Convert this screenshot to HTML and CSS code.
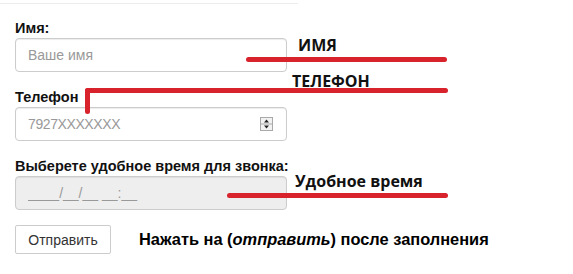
FILE: index.html
```html
<!DOCTYPE html>
<html lang="ru">
<head>
    <meta charset="UTF-8">
    <title>Заказать звонок</title>
    <link rel="stylesheet" href="styles.css">
</head>
<body>

<div class="page">
    <div class="top-rule"></div>

    <form class="call-form">
        <div class="form-group">
            <label for="name">Имя:</label>
            <input type="text" id="name" class="form-control" placeholder="Ваше имя">
        </div>
        <div class="form-group">
            <label for="phone">Телефон</label>
            <div class="spin-wrap">
                <input type="text" id="phone" class="form-control" placeholder="7927XXXXXXX">
                <span class="spinner">
                    <svg width="13" height="14" viewBox="0 0 13 14">
                        <rect x="0.5" y="0.5" width="12" height="13" fill="#f2f2f2" stroke="#a9a9a9"/>
                        <line x1="1" y1="7" x2="12" y2="7" stroke="#a9a9a9"/>
                        <path d="M4 5.5 L6.5 2.5 L9 5.5 Z" fill="#222"/>
                        <path d="M4 8.5 L6.5 11.5 L9 8.5 Z" fill="#222"/>
                    </svg>
                </span>
            </div>
        </div>
        <div class="form-group">
            <label for="time">Выберете удобное время для звонка:</label>
            <input type="text" id="time" class="form-control readonly" value="____/__/__ __:__" readonly>
        </div>
        <div class="submit-row">
            <button type="button" class="btn">Отправить</button>
            <span class="hint">Нажать на (<em>отправить</em>) после заполнения</span>
        </div>
    </form>

    <!-- пометки поверх формы -->
    <span class="note note-name">ИМЯ</span>
    <span class="mark mark-name"></span>

    <span class="note note-phone">ТЕЛЕФОН</span>
    <span class="mark mark-phone"></span>
    <span class="mark mark-phone-down"></span>

    <span class="note note-time">Удобное время</span>
    <span class="mark mark-time"></span>
</div>

</body>
</html>
```

FILE: styles.css
```css
body {
    margin: 0;
    padding: 0;
    background: #fff;
    font-family: "Liberation Sans", Arial, sans-serif;
    color: #000;
}
.page {
    position: relative;
    width: 573px;
    height: 274px;
    overflow: hidden;
}
.top-rule {
    width: 298px;
    height: 3px;
    border-bottom: 1px solid #ececec;
}
.call-form {
    padding: 14px 0 0 15px;
}
.form-group {
    margin-bottom: 15px;
}
.form-group label {
    display: block;
    font-size: 14.5px;
    font-weight: bold;
    line-height: 20px;
    color: #111;
}
.form-control {
    display: block;
    box-sizing: border-box;
    width: 272px;
    height: 34px;
    padding: 6px 12px;
    font-family: "Liberation Sans", Arial, sans-serif;
    font-size: 14px;
    color: #555;
    border: 1px solid #ccc;
    border-radius: 4px;
    box-shadow: inset 0 1px 1px rgba(0, 0, 0, 0.075);
    background: #fff;
}
.form-control::placeholder {
    color: #999;
}
#phone::placeholder {
    letter-spacing: -0.4px;
}
.form-control.readonly {
    background: #eee;
    color: #999;
}
.spin-wrap {
    position: relative;
    width: 272px;
}
.spinner {
    position: absolute;
    right: 14px;
    top: 10px;
    line-height: 0;
}
.submit-row {
    display: flex;
    align-items: center;
}
.btn {
    box-sizing: border-box;
    width: 96px;
    height: 29px;
    font-family: "Liberation Sans", Arial, sans-serif;
    font-size: 14px;
    color: #333;
    background: #fff;
    border: 1px solid #ccc;
    border-radius: 2px;
}
.hint {
    margin-left: 28px;
    font-size: 16.4px;
    font-weight: bold;
    white-space: nowrap;
}
.note {
    position: absolute;
    font-family: "Open Sans", sans-serif;
    font-weight: bold;
    font-size: 16px;
    line-height: 20px;
    color: #111;
}
.note-name { left: 298px; top: 35px; }
.note-phone { left: 292px; top: 71px; }
.note-time { left: 295px; top: 171px; }
.mark {
    position: absolute;
    background: #d8222c;
    border-radius: 3px;
}
.mark-name { left: 246px; top: 57px; width: 201px; height: 5px; }
.mark-phone { left: 85px; top: 88px; width: 363px; height: 5px; }
.mark-phone-down { left: 85px; top: 88px; width: 5px; height: 26px; }
.mark-time { left: 227px; top: 193px; width: 221px; height: 5px; }
```
